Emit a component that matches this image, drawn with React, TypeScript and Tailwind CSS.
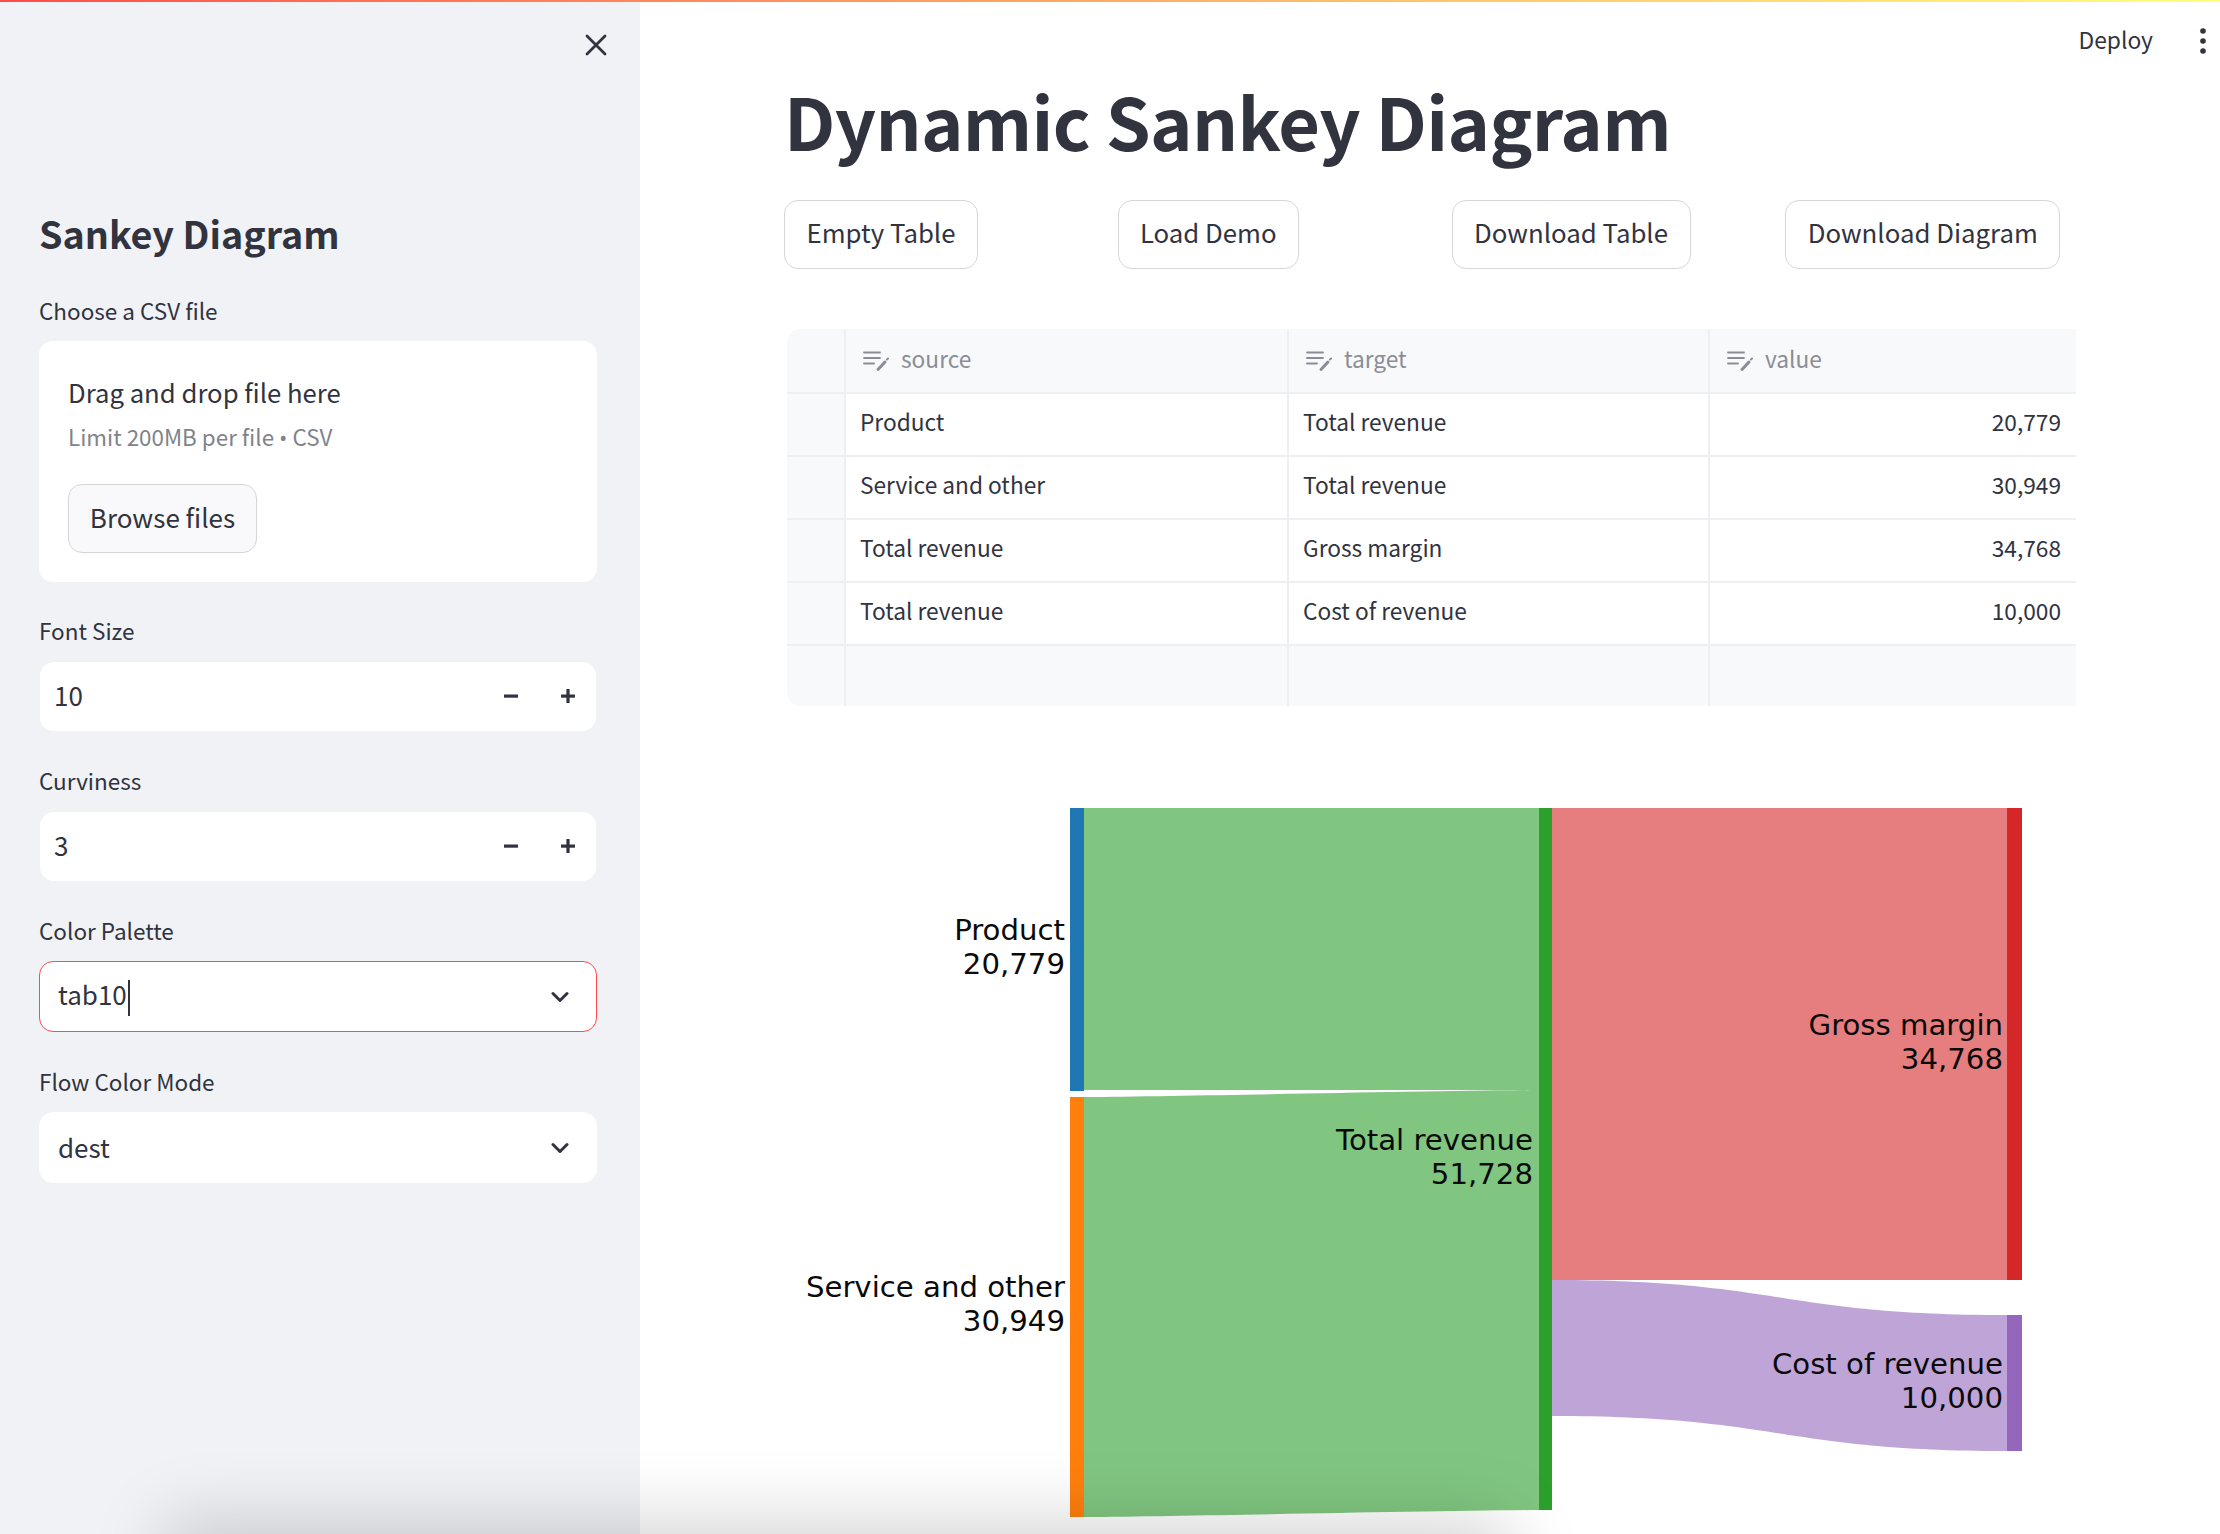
import React from 'react';

const tableRows = [
  ['Product', 'Total revenue', '20,779'],
  ['Service and other', 'Total revenue', '30,949'],
  ['Total revenue', 'Gross margin', '34,768'],
  ['Total revenue', 'Cost of revenue', '10,000'],
];

const ChevronIcon = () => (
  <svg width="18" height="12" viewBox="0 0 18 12" fill="none" stroke="#31333f" strokeWidth="3" strokeLinecap="round" strokeLinejoin="round">
    <path d="M2 2.5l7 7 7-7" />
  </svg>
);

const ColumnIcon = () => (
  <svg width="26" height="22" viewBox="0 0 26 22" fill="none" stroke="#8b8d96" strokeLinecap="round">
    <path d="M1 2.5h16M1 8h16M1 13.5h10" strokeWidth="1.8" />
    <path d="M15 19.5l7-7.5" strokeWidth="3" />
    <path d="M24 9.5l1-1" strokeWidth="2" />
  </svg>
);

function FieldLabel({ text }: { text: string }) {
  return <div className="h-[30px] text-[22.5px] leading-[25px]">{text}</div>;
}

function NumberField({ label, value, className }: { label: string; value: string; className: string }) {
  return (
    <div className={className}>
      <FieldLabel text={label} />
      <div className="mt-[14px] mx-[1px] flex h-[69px] items-center rounded-[14px] bg-white pl-[14px] text-[26px]">
        <span className="flex-1 pb-[5px]">{value}</span>
        <svg width="16" height="16" viewBox="0 0 16 16" className="mr-[41px] -mt-[1px]" fill="#31333f">
          <rect x="1" y="6.5" width="14" height="3.2" />
        </svg>
        <svg width="16" height="16" viewBox="0 0 16 16" className="mr-[20px] -mt-[1px]" fill="#31333f">
          <rect x="1" y="6.5" width="14" height="3.2" />
          <rect x="6.4" y="1" width="3.2" height="14" />
        </svg>
      </div>
    </div>
  );
}

function SelectField({ label, value, focused }: { label: string; value: string; focused?: boolean }) {
  return (
    <div className="mt-[37px]">
      <FieldLabel text={label} />
      <div
        className={`mt-[13px] flex h-[71px] items-center rounded-[14px] border bg-white pl-[18px] pr-[27px] text-[26px] ${
          focused ? 'border-[#ff4b4b]' : 'border-white'
        }`}
      >
        <span className="flex-1 pb-[3px]">
          {value}
          {focused && <span className="ml-[1px] inline-block h-[36px] w-[2px] bg-[#31333f] align-middle" />}
        </span>
        <ChevronIcon />
      </div>
    </div>
  );
}

function Sidebar() {
  return (
    <aside className="flex w-[640px] flex-col bg-[#f0f2f6] pl-[39px] pr-[43px]">
      <div className="flex justify-end pt-[32px]">
        <svg width="22" height="22" viewBox="0 0 22 22" className="-mr-[10px]" fill="none" stroke="#31333f" strokeWidth="2.8" strokeLinecap="round">
          <path d="M2 2l18 18M20 2L2 20" />
        </svg>
      </div>
      <h2 className="mt-[155px] h-[50px] text-[37.7px] font-semibold leading-[43px]">Sankey Diagram</h2>
      <div className="mt-[37px]">
        <FieldLabel text="Choose a CSV file" />
      </div>
      <div className="mt-[13px] h-[241px] rounded-[14px] bg-white pl-[29px] pt-[35px]">
        <div className="h-[36px] text-[25.7px] leading-[31px]">Drag and drop file here</div>
        <div className="mt-[10px] h-[34px] text-[22.4px] leading-[29px] text-[#80838c]">
          Limit 200MB per file <span className="font-['Open_Sans',sans-serif]">•</span> CSV
        </div>
        <button className="mt-[28px] h-[69px] w-[189px] rounded-[14px] border border-[#d5d6da] bg-[#f9f9fb] pb-[5px] text-[26px]">
          Browse files
        </button>
      </div>
      <NumberField className="mt-[36px]" label="Font Size" value="10" />
      <NumberField className="mt-[37px]" label="Curviness" value="3" />
      <SelectField label="Color Palette" value="tab10" focused />
      <SelectField label="Flow Color Mode" value="dest" />
    </aside>
  );
}

function DataTable() {
  const cols = 'grid grid-cols-[59px_443px_421px_366px]';
  const cell = 'border-b-2 border-r-2 border-[#eeeff3]';
  const lastCell = 'border-b-2 border-[#eeeff3]';
  return (
    <div className="mt-[60px] ml-[3px] w-[1289px] overflow-hidden rounded-l-[14px] text-[22.7px]">
      <div className={`${cols} h-[65px] bg-[#f8f9fb] text-[#8b8d96]`}>
        <div className={cell} />
        {['source', 'target', 'value'].map((name, i) => (
          <div key={name} className={`flex items-center pl-[17px] ${i === 2 ? lastCell : cell}`}>
            <ColumnIcon />
            <span className="ml-[12px] pb-[2px]">{name}</span>
          </div>
        ))}
      </div>
      {tableRows.map((row, i) => (
        <div key={i} className={`${cols} h-[63px]`}>
          <div className={`bg-[#f8f9fb] ${cell}`} />
          <div className={`flex items-center pb-[5px] pl-[14px] ${cell}`}>{row[0]}</div>
          <div className={`flex items-center pb-[5px] pl-[14px] ${cell}`}>{row[1]}</div>
          <div className={`flex items-center justify-end pb-[5px] pr-[15px] ${lastCell}`}>{row[2]}</div>
        </div>
      ))}
      <div className={`${cols} h-[60px] bg-[#f8f9fb]`}>
        <div className="border-r-2 border-[#eeeff3]" />
        <div className="border-r-2 border-[#eeeff3]" />
        <div className="border-r-2 border-[#eeeff3]" />
        <div />
      </div>
    </div>
  );
}

function SankeyLabel({ x, y, name, value }: { x: number; y: number; name: string; value: string }) {
  return (
    <text x={x} y={y} textAnchor="end" fontSize="29.2" fill="#0a0a0a" className="font-['DejaVu_Sans',sans-serif]">
      <tspan x={x}>{name}</tspan>
      <tspan x={x} dy="34">{value}</tspan>
    </text>
  );
}

function SankeyChart() {
  return (
    <svg width="1440" height="754" viewBox="780 780 1440 754" className="-ml-[4px] mt-[74px] block shrink-0">
      <path d="M1084 808H1539V1090H1084Z" fill="#2ca02c" fillOpacity="0.6" />
      <path d="M1084 1097C1200 1096 1420 1091 1539 1090V1510C1420 1511 1200 1516 1084 1517Z" fill="#2ca02c" fillOpacity="0.6" />
      <path d="M1552 808H2007V1280H1552Z" fill="#d62728" fillOpacity="0.6" />
      <path d="M1552 1280C1780 1280 1780 1315 2007 1315V1451C1780 1451 1780 1416 1552 1416Z" fill="#9467bd" fillOpacity="0.6" />
      <rect x="1070" y="808" width="14" height="283" fill="#1f77b4" />
      <rect x="1070" y="1097" width="14" height="420" fill="#ff7f0e" />
      <rect x="1539" y="808" width="13" height="702" fill="#2ca02c" />
      <rect x="2007" y="808" width="15" height="472" fill="#d62728" />
      <rect x="2007" y="1315" width="15" height="136" fill="#9467bd" />
      <SankeyLabel x={1065} y={940} name="Product" value="20,779" />
      <SankeyLabel x={1065} y={1297} name="Service and other" value="30,949" />
      <SankeyLabel x={1533} y={1150} name="Total revenue" value="51,728" />
      <SankeyLabel x={2003} y={1035} name="Gross margin" value="34,768" />
      <SankeyLabel x={2003} y={1374} name="Cost of revenue" value="10,000" />
    </svg>
  );
}

export default function App() {
  return (
    <div className="relative flex h-[1534px] w-[2220px] flex-col overflow-hidden bg-white font-['Noto_Sans_CJK_SC',sans-serif] text-[#31333f]">
      <div className="h-[2px] shrink-0 bg-gradient-to-r from-[#ff4b4b] to-[#fffd80]" />
      <div className="flex min-h-0 flex-1">
        <Sidebar />
        <main className="flex min-w-0 flex-1 flex-col pl-[144px]">
          <div className="flex h-[78px] shrink-0 items-center justify-end pr-[14px]">
            <span className="pb-[2px] text-[22.8px]">Deploy</span>
            <svg width="6" height="26" viewBox="0 0 6 26" className="ml-[47px]" fill="#31333f">
              <circle cx="3" cy="3" r="2.8" />
              <circle cx="3" cy="13" r="2.8" />
              <circle cx="3" cy="23" r="2.8" />
            </svg>
          </div>
          <h1 className="h-[90px] shrink-0 text-[72px] font-bold leading-[80px] tracking-[-0.65px]">Dynamic Sankey Diagram</h1>
          <div className="mt-[30px] grid w-[1335px] shrink-0 grid-cols-4 text-[25.8px]">
            {[
              ['Empty Table', 'w-[194px]'],
              ['Load Demo', 'w-[181px]'],
              ['Download Table', 'w-[239px]'],
              ['Download Diagram', 'w-[275px]'],
            ].map(([label, width]) => (
              <button key={label} className={`h-[69px] rounded-[14px] border border-[#d5d6da] bg-white pb-[5px] ${width}`}>
                {label}
              </button>
            ))}
          </div>
          <DataTable />
          <SankeyChart />
        </main>
      </div>
      {/* soft window shadow bleeding in along the bottom edge */}
      <div className="pointer-events-none absolute left-[215px] top-[1570px] h-[40px] w-[1245px] shadow-[0_0_70px_50px_rgba(0,0,0,0.17)]" />
    </div>
  );
}
